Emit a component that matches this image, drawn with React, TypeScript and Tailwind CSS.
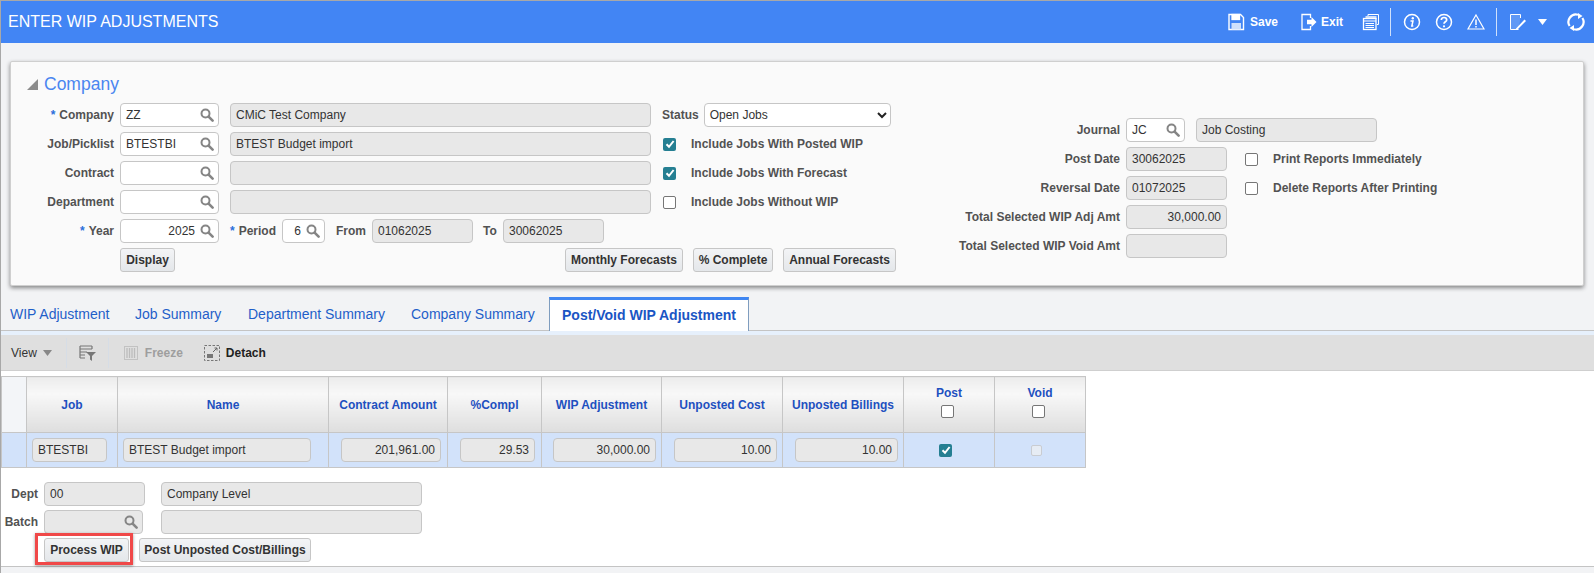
import React from "react";

const Search = () => (
  <svg width="14" height="14" viewBox="0 0 14 14" className="shrink-0">
    <circle cx="5.5" cy="5.5" r="4" fill="none" stroke="#858585" strokeWidth="2" />
    <line x1="8.6" y1="8.6" x2="12.6" y2="12.6" stroke="#858585" strokeWidth="2.6" strokeLinecap="round" />
  </svg>
);

function Label({ w, req, children }: { w: string; req?: boolean; children: React.ReactNode }) {
  return (
    <div className={`${w} shrink-0 text-right text-[12px] font-bold text-[#525252] whitespace-nowrap`}>
      {req && <span className="text-[#2a6fdb] mr-1">*</span>}
      {children}
    </div>
  );
}

function Lookup({ w, value, right, off }: { w: string; value?: string; right?: boolean; off?: boolean }) {
  return (
    <div className={`${w} ${off ? "bg-[#e8e8e8]" : "bg-white"} h-6 shrink-0 border border-[#c6c6c6] rounded-[4px] flex items-center pl-[5px] pr-[4px] text-[12px] text-[#333]`}>
      <span className={`flex-1 whitespace-nowrap ${right ? "text-right pr-[5px]" : ""}`}>{value}</span>
      <Search />
    </div>
  );
}

function Box({ w, value, right }: { w: string; value?: string; right?: boolean }) {
  return (
    <div className={`${w} h-6 shrink-0 bg-[#e8e8e8] border border-[#c6c6c6] rounded-[4px] flex items-center px-[5px] text-[12px] text-[#333] whitespace-nowrap ${right ? "justify-end" : ""}`}>
      {value}
    </div>
  );
}

function Check({ on, off, cls = "" }: { on?: boolean; off?: boolean; cls?: string }) {
  if (off) return <span className={`${cls} w-[11px] h-[11px] rounded-[2px] border border-[#c9ccd1] bg-[#e6ecf4] inline-block shrink-0`} />;
  if (on)
    return (
      <span className={`${cls} w-[13px] h-[13px] rounded-[2px] bg-[#257f92] flex items-center justify-center shrink-0`}>
        <svg width="10" height="10" viewBox="0 0 10 10">
          <path d="M1.5 5.2 L4 7.8 L8.6 2" fill="none" stroke="#fff" strokeWidth="2" />
        </svg>
      </span>
    );
  return <span className={`${cls} w-[13px] h-[13px] rounded-[2px] border border-[#767676] bg-white inline-block shrink-0`} />;
}

function Btn({ w, children }: { w: string; children: React.ReactNode }) {
  return (
    <div className={`${w} h-6 shrink-0 rounded-[3px] border border-[#c6c6c6] bg-gradient-to-b from-[#f3f4f6] to-[#e4e7ea] flex items-center justify-center text-[12px] font-bold text-[#333] whitespace-nowrap`}>
      {children}
    </div>
  );
}

const CheckLabel = ({ children }: { children: React.ReactNode }) => (
  <span className="text-[12px] font-bold text-[#525252] whitespace-nowrap ml-[15px]">{children}</span>
);

const Row = ({ children }: { children: React.ReactNode }) => <div className="flex items-center h-6 mb-[5px]">{children}</div>;

const HeadIcon = ({ w = 18, children }: { w?: number; children: React.ReactNode }) => (
  <svg width={w} height="18" viewBox="0 0 18 18" fill="none" stroke="#fff" strokeWidth="1.3" className="shrink-0">
    {children}
  </svg>
);

function Header() {
  return (
    <div className="h-[42px] bg-[#4285f4] flex items-center justify-between pl-[7px] pr-[9px] text-white">
      <div className="text-[16px]">ENTER WIP ADJUSTMENTS</div>
      <div className="flex items-center">
        <HeadIcon>
          <path d="M2 1.5h11.5l3 3v12h-14.500z" strokeWidth="1.4" />
          <rect x="5" y="1.500" width="7.500" height="5" fill="#fff" />
          <rect x="4.500" y="10" width="9.500" height="6.500" fill="#cfe0fb" stroke="none" />
        </HeadIcon>
        <span className="text-[12px] font-bold ml-[5px]">Save</span>
        <span className="ml-[22px]">
          <HeadIcon>
            <path d="M10.500 5V1.500H2v15h8.500V13" />
            <path d="M7 6.800h4.500V4l5 5-5 5v-2.800H7z" fill="#fff" stroke="none" />
          </HeadIcon>
        </span>
        <span className="text-[12px] font-bold ml-[3px]">Exit</span>
        <span className="ml-[19px]">
          <HeadIcon>
            <path d="M6 3V1.500h10.500v10H15" strokeWidth="1" />
            <rect x="3.500" y="3" width="11" height="3" fill="#cfe0fb" stroke="none" />
            <rect x="1.500" y="5.500" width="12.500" height="11" fill="#4285f4" />
            <path d="M1.500 8h12.500M3.500 10.500h8.500M3.500 12.500h8.500M3.500 14.500h8.500" strokeWidth="1.100" />
          </HeadIcon>
        </span>
        <div className="w-px h-[28px] bg-[#cfe0fb] ml-[10px]" />
        <span className="ml-[12px]">
          <HeadIcon>
            <circle cx="9" cy="9" r="7.500" strokeWidth="1.500" />
            <circle cx="9.800" cy="5.200" r="1.200" fill="#fff" stroke="none" />
            <path d="M7.500 8h2.500l-1.200 5h1.500" strokeWidth="1.500" />
          </HeadIcon>
        </span>
        <span className="ml-[14px]">
          <HeadIcon>
            <circle cx="9" cy="9" r="7.500" strokeWidth="1.500" />
            <path d="M6.300 7c0-1.600 1.200-2.500 2.700-2.500s2.700 .9 2.700 2.400c0 1.900-2.700 1.900-2.700 3.900" strokeWidth="1.700" />
            <circle cx="9" cy="13.300" r="1.100" fill="#fff" stroke="none" />
          </HeadIcon>
        </span>
        <span className="ml-[14px]">
          <HeadIcon>
            <path d="M9 2 L17 16 H1 Z" strokeWidth="1.200" />
            <path d="M9 6.500v5.500M9 13v1.500" strokeWidth="1.500" />
          </HeadIcon>
        </span>
        <div className="w-px h-[28px] bg-[#cfe0fb] ml-[11px]" />
        <span className="ml-[12px]">
          <HeadIcon>
            <path d="M11.500 5V1.500H1.500v15h8" fill="#5f98f5" strokeWidth="1" />
            <path d="M7 15.500 L15.500 6.500 L17 8 L8.500 16.500 L6.500 17 Z" fill="#fff" stroke="none" />
          </HeadIcon>
        </span>
        <svg width="9" height="6" viewBox="0 0 9 6" className="ml-[11px] shrink-0"><path d="M0 0h9L4.500 6z" fill="#fff" /></svg>
        <span className="ml-[20px]">
          <HeadIcon>
            <path d="M2.600 13A7.500 7.500 0 0 1 11 1.800" strokeWidth="2.200" />
            <path d="M15.400 5A7.500 7.500 0 0 1 7 16.200" strokeWidth="2.200" />
            <path d="M11 0l4.500 3L11 6zM7 12l-4.500 3L7 18z" fill="#fff" stroke="none" />
          </HeadIcon>
        </span>
      </div>
    </div>
  );
}

function Panel() {
  return (
    <div className="ml-[9px] mt-[18px] w-[1574px] h-[225px] bg-[#fafafa] border border-[#cfcfcf] rounded-[2px] shadow-[0_2px_4px_rgba(0,0,0,0.45)]">
      <div className="h-[41px] flex items-center pl-[16px] pt-[4px]">
        <svg width="11" height="11" viewBox="0 0 11 11"><path d="M11 0v11H0z" fill="#8c8c8c" /></svg>
        <span className="text-[17.5px] text-[#4a86f0] ml-[6px]">Company</span>
      </div>
      <div className="flex">
        <div className="w-[885px] shrink-0">
          <Row>
            <Label w="w-[103px]" req>Company</Label>
            <div className="ml-[6px]"><Lookup w="w-[99px]" value="ZZ" /></div>
            <div className="ml-[11px]"><Box w="w-[421px]" value="CMiC Test Company" /></div>
            <div className="ml-[11px] text-[12px] font-bold text-[#525252]">Status</div>
            <div className="ml-[5px] w-[187px] h-6 bg-white border border-[#c6c6c6] rounded-[4px] flex items-center justify-between pl-[5px] pr-[3px] text-[12px] text-[#333]">
              <span>Open Jobs</span>
              <svg width="10" height="7" viewBox="0 0 10 7"><path d="M1 1l4 4 4-4" fill="none" stroke="#222" strokeWidth="2" /></svg>
            </div>
          </Row>
          <Row>
            <Label w="w-[103px]">Job/Picklist</Label>
            <div className="ml-[6px]"><Lookup w="w-[99px]" value="BTESTBI" /></div>
            <div className="ml-[11px]"><Box w="w-[421px]" value="BTEST Budget import" /></div>
            <Check on cls="ml-[12px]" />
            <CheckLabel>Include Jobs With Posted WIP</CheckLabel>
          </Row>
          <Row>
            <Label w="w-[103px]">Contract</Label>
            <div className="ml-[6px]"><Lookup w="w-[99px]" /></div>
            <div className="ml-[11px]"><Box w="w-[421px]" /></div>
            <Check on cls="ml-[12px]" />
            <CheckLabel>Include Jobs With Forecast</CheckLabel>
          </Row>
          <Row>
            <Label w="w-[103px]">Department</Label>
            <div className="ml-[6px]"><Lookup w="w-[99px]" /></div>
            <div className="ml-[11px]"><Box w="w-[421px]" /></div>
            <Check cls="ml-[12px]" />
            <CheckLabel>Include Jobs Without WIP</CheckLabel>
          </Row>
          <Row>
            <Label w="w-[103px]" req>Year</Label>
            <div className="ml-[6px]"><Lookup w="w-[99px]" value="2025" right /></div>
            <div className="ml-[11px]"><Label w="w-[46px]" req>Period</Label></div>
            <div className="ml-[6px]"><Lookup w="w-[43px]" value="6" right /></div>
            <div className="ml-[11px] w-[30px] text-[12px] font-bold text-[#525252]">From</div>
            <div className="ml-[6px]"><Box w="w-[101px]" value="01062025" /></div>
            <div className="ml-[10px] w-[14px] text-[12px] font-bold text-[#525252]">To</div>
            <div className="ml-[6px]"><Box w="w-[101px]" value="30062025" /></div>
          </Row>
          <Row>
            <div className="ml-[109px]"><Btn w="w-[55px]">Display</Btn></div>
            <div className="ml-[390px]"><Btn w="w-[118px]">Monthly Forecasts</Btn></div>
            <div className="ml-[10px]"><Btn w="w-[80px]">% Complete</Btn></div>
            <div className="ml-[10px]"><Btn w="w-[113px]">Annual Forecasts</Btn></div>
          </Row>
        </div>
        <div className="pt-[15px]">
          <Row>
            <Label w="w-[224px]">Journal</Label>
            <div className="ml-[6px]"><Lookup w="w-[59px]" value="JC" /></div>
            <div className="ml-[11px]"><Box w="w-[181px]" value="Job Costing" /></div>
          </Row>
          <Row>
            <Label w="w-[224px]">Post Date</Label>
            <div className="ml-[6px]"><Box w="w-[101px]" value="30062025" /></div>
            <Check cls="ml-[18px]" />
            <CheckLabel>Print Reports Immediately</CheckLabel>
          </Row>
          <Row>
            <Label w="w-[224px]">Reversal Date</Label>
            <div className="ml-[6px]"><Box w="w-[101px]" value="01072025" /></div>
            <Check cls="ml-[18px]" />
            <CheckLabel>Delete Reports After Printing</CheckLabel>
          </Row>
          <Row>
            <Label w="w-[224px]">Total Selected WIP Adj Amt</Label>
            <div className="ml-[6px]"><Box w="w-[101px]" value="30,000.00" right /></div>
          </Row>
          <Row>
            <Label w="w-[224px]">Total Selected WIP Void Amt</Label>
            <div className="ml-[6px]"><Box w="w-[101px]" /></div>
          </Row>
        </div>
      </div>
    </div>
  );
}

function Tabs() {
  return (
    <div className="mt-[11px] h-[34px] flex items-stretch border-b border-[#c4c4c4] text-[14px] text-[#1f5fc9] pl-[9px]">
      <div className="flex items-center pt-[2px] w-[125px] whitespace-nowrap">WIP Adjustment</div>
      <div className="flex items-center pt-[2px] w-[113px] whitespace-nowrap">Job Summary</div>
      <div className="flex items-center pt-[2px] w-[163px] whitespace-nowrap">Department Summary</div>
      <div className="flex items-center pt-[2px] w-[138px] whitespace-nowrap">Company Summary</div>
      <div className="w-[200px] -mb-px bg-white border-x border-x-[#7f9dbf] border-t-[3px] border-t-[#3f86f2] flex items-center justify-center font-bold text-[#1a55c4] whitespace-nowrap">Post/Void WIP Adjustment</div>
    </div>
  );
}

function Toolbar() {
  return (
    <div>
      <div className="h-[4px] bg-[#e6f0fc]" />
      <div className="h-[36px] bg-[#dfdfdf] border-b border-[#cfcfcf] flex items-center text-[12px] text-[#333]">
        <span className="ml-[10px]">View</span>
        <svg width="9" height="6" viewBox="0 0 9 6" className="ml-[6px]"><path d="M0 0h9L4.500 6z" fill="#888" /></svg>
        <div className="w-px h-[30px] bg-[#d6dde6] ml-[14px]" />
        <svg width="17" height="16" viewBox="0 0 17 16" className="ml-[12px]">
          <path d="M1 1h12M1 4h12M1 7h7M1 10h5M1 13h5M1 1v12M13 1v3" stroke="#777" strokeWidth="1.200" fill="none" />
          <path d="M7 7h10l-4 4v5l-2-1.500V11z" fill="#777" />
        </svg>
        <div className="w-px h-[30px] bg-[#d6dde6] ml-[12px]" />
        <svg width="14" height="14" viewBox="0 0 14 14" className="ml-[15px]">
          <rect x=".5" y=".5" width="13" height="13" fill="none" stroke="#c2c2c2" />
          <path d="M3 2v10M5.500 2v10M8 2v10M10.500 2v10" stroke="#bcbcbc" strokeWidth="1.300" />
        </svg>
        <span className="ml-[7px] font-bold text-[#9e9e9e]">Freeze</span>
        <svg width="16" height="16" viewBox="0 0 16 16" className="ml-[21px]">
          <rect x=".5" y=".5" width="15" height="15" fill="none" stroke="#777" strokeDasharray="2.500 1.500" />
          <rect x="3" y="9" width="6" height="4" fill="#777" />
          <path d="M9 7l4-4M10.500 3H13v2.500" fill="none" stroke="#666" />
        </svg>
        <span className="ml-[6px] font-bold text-[#222]">Detach</span>
      </div>
    </div>
  );
}

const Th = ({ w, children }: { w: string; children?: React.ReactNode }) => (
  <th className={`${w} border border-[#c6c6c6] p-0 text-[12px] font-bold text-[#1e50c0] bg-gradient-to-b from-[#ececec] via-[#f8f8f8] via-30% to-[#dedede]`}>
    {children}
  </th>
);

const Td = ({ children }: { children?: React.ReactNode }) => (
  <td className="border border-[#c6c6c6] p-0 bg-[#d2e2fa]">{children}</td>
);

function Grid() {
  return (
    <div className="bg-white pt-[5px] flex">
      <table className="w-[1084px] table-fixed border-collapse">
        <thead>
          <tr className="h-[56px]">
            <th className="w-[25px] border border-[#c6c6c6] bg-[#f3f5f8] p-0" />
            <Th w="w-[91px]">Job</Th>
            <Th w="w-[211px]">Name</Th>
            <Th w="w-[119px]">Contract Amount</Th>
            <Th w="w-[94px]">%Compl</Th>
            <Th w="w-[120px]">WIP Adjustment</Th>
            <Th w="w-[121px]">Unposted Cost</Th>
            <Th w="w-[121px]">Unposted Billings</Th>
            <Th w="w-[91px]">
              <div className="pb-[7px]">
                <div>Post</div>
                <div className="flex justify-center mt-[3px] pr-[3px]"><Check /></div>
              </div>
            </Th>
            <Th w="w-[91px]">
              <div className="pb-[7px]">
                <div>Void</div>
                <div className="flex justify-center mt-[3px] pr-[3px]"><Check /></div>
              </div>
            </Th>
          </tr>
        </thead>
        <tbody>
          <tr className="h-[35px]">
            <Td />
            <Td><div className="pl-[5px]"><Box w="w-[75px]" value="BTESTBI" /></div></Td>
            <Td><div className="pl-[5px]"><Box w="w-[188px]" value="BTEST Budget import" /></div></Td>
            <Td><div className="pl-[12px]"><Box w="w-[100px]" value="201,961.00" right /></div></Td>
            <Td><div className="pl-[12px]"><Box w="w-[75px]" value="29.53" right /></div></Td>
            <Td><div className="pl-[11px]"><Box w="w-[103px]" value="30,000.00" right /></div></Td>
            <Td><div className="pl-[12px]"><Box w="w-[103px]" value="10.00" right /></div></Td>
            <Td><div className="pl-[12px]"><Box w="w-[103px]" value="10.00" right /></div></Td>
            <Td><div className="flex justify-center pr-[7px]"><Check on /></div></Td>
            <Td><div className="flex justify-center pr-[7px]"><Check off /></div></Td>
          </tr>
        </tbody>
      </table>
    </div>
  );
}

function Footer() {
  return (
    <div className="bg-white h-[99px] pt-[14px] border-b border-[#c4c4c4]">
      <div className="flex items-center h-6 mb-[4px]">
        <Label w="w-[37px]">Dept</Label>
        <div className="ml-[6px]"><Box w="w-[101px]" value="00" /></div>
        <div className="ml-[16px]"><Box w="w-[261px]" value="Company Level" /></div>
      </div>
      <div className="flex items-center h-6 mb-[4px]">
        <Label w="w-[37px]">Batch</Label>
        <div className="ml-[6px]"><Lookup w="w-[99px]" off /></div>
        <div className="ml-[18px]"><Box w="w-[261px]" /></div>
      </div>
      <div className="flex items-center h-6 pl-[43px]">
        <div className="relative">
          <Btn w="w-[85px]">Process WIP</Btn>
          <div className="absolute -left-[9px] -top-[5px] w-[98px] h-[32px] border-[3px] border-[#f04848] shadow-[0_1px_3px_rgba(0,0,0,0.4)]" />
        </div>
        <div className="ml-[10px]"><Btn w="w-[172px]">Post Unposted Cost/Billings</Btn></div>
      </div>
    </div>
  );
}

export default function App() {
  return (
    <div className="w-[1594px] h-[573px] overflow-hidden bg-[#f2f3f5] border-l border-t border-[#a8a8a8] font-['Liberation_Sans',Arial,sans-serif]">
      <Header />
      <Panel />
      <Tabs />
      <Toolbar />
      <Grid />
      <Footer />
    </div>
  );
}
